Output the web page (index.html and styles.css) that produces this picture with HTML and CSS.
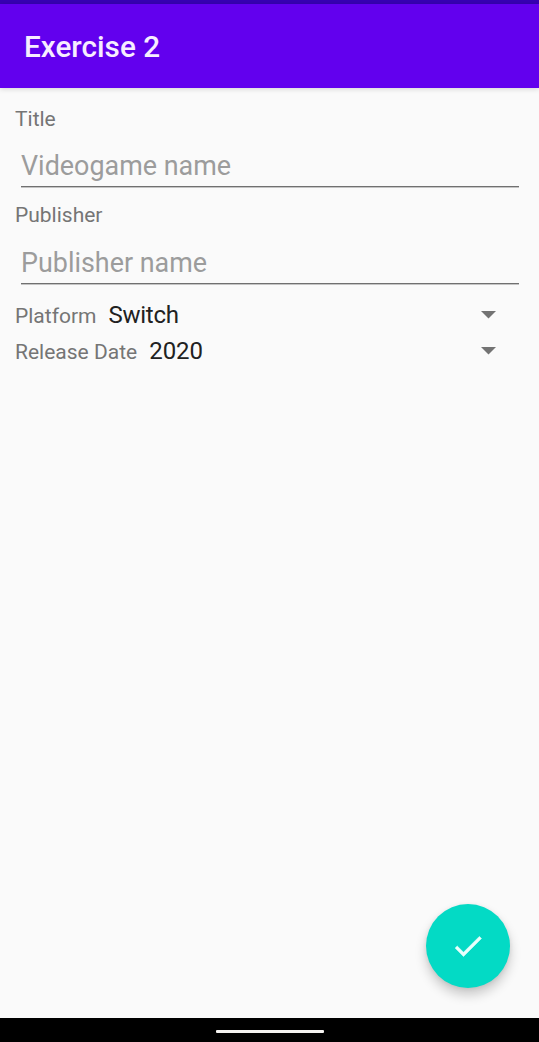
FILE: index.html
```html
<!DOCTYPE html>
<html lang="en">
<head>
<meta charset="utf-8">
<title>Exercise 2</title>
<link rel="stylesheet" href="styles.css">
</head>
<body>
<div class="screen">
  <div class="status-bar"></div>
  <header class="app-bar"><h1>Exercise 2</h1></header>
  <main class="form">
    <label class="label label-first" for="title">Title</label>
    <input class="field" id="title" type="text" placeholder="Videogame name">
    <label class="label" for="publisher">Publisher</label>
    <input class="field" id="publisher" type="text" placeholder="Publisher name">
    <div class="row row-first">
      <span class="label">Platform</span>
      <div class="spinner"><span class="platform">Switch</span><svg class="arrow" viewBox="0 0 15 8"><path d="M0 0h15L7.5 7.5z"/></svg></div>
    </div>
    <div class="row">
      <span class="label">Release Date</span>
      <div class="spinner"><span>2020</span><svg class="arrow" viewBox="0 0 15 8"><path d="M0 0h15L7.5 7.5z"/></svg></div>
    </div>
  </main>
  <button class="fab" aria-label="Save"><svg viewBox="0 0 24 24"><path d="M9 16.17L4.83 12l-1.42 1.41L9 19 21 7l-1.41-1.41z"/></svg></button>
  <footer class="nav-bar"><div class="handle"></div></footer>
</div>
</body>
</html>
```
FILE: styles.css
```css
* { box-sizing: border-box; }
body { margin: 0; font-family: Roboto, sans-serif; background: #fafafa; }
.screen { position: relative; display: flex; flex-direction: column; height: 1042px; overflow: hidden; }
.status-bar { height: 4px; background: #3700b3; }
.app-bar { height: 84px; padding-left: 24px; display: flex; align-items: center; background: #6200ee; box-shadow: 0 1px 5px rgba(0,0,0,.16); }
h1 { margin: 0; padding-top: 2px; font-size: 29.7px; line-height: 36px; font-weight: 500; color: #f7edff; }
.form { flex: 1; display: flex; flex-direction: column; padding: 16px 15px 0; }
.label { display: block; height: 28px; font-size: 21px; line-height: 28px; color: #757575; white-space: nowrap; }
.label-first { line-height: 30px; }
.field { height: 55px; margin: 0 5px 14px 6px; padding: 17px 0 3px; border: 0; border-bottom: 1px solid #707070; box-shadow: 0 1px 0 #c4c4c4; outline: 0; background: transparent; font: 26.9px/32px Roboto, sans-serif; color: #222; }
.field::placeholder { color: #9c9c9c; opacity: 1; }
.row { display: flex; height: 36px; align-items: center; gap: 12px; }
.row .label { height: 30px; line-height: 32px; }
.row-first { margin-top: -1px; }
.spinner { flex: 1; display: flex; align-items: center; justify-content: space-between; padding-right: 28px; font-size: 24px; line-height: 34px; color: #212121; }
.platform { letter-spacing: -.25px; }
.arrow { width: 15px; height: 8px; fill: #737373; }
.fab { position: absolute; left: 426px; top: 904px; width: 84px; height: 84px; padding: 0; border: 0; border-radius: 50%; display: grid; place-items: center; background: #03dac5; box-shadow: 0 7px 12px rgba(0,0,0,.2), 0 1px 4px rgba(0,0,0,.08); }
.fab svg { width: 36px; height: 36px; fill: #e9fffc; stroke: #e9fffc; stroke-width: .35; }
.nav-bar { height: 24px; background: #000; display: flex; align-items: center; justify-content: center; padding-top: 3px; }
.handle { width: 108px; height: 3px; border-radius: 1px; background: #f5f3f1; }
```
